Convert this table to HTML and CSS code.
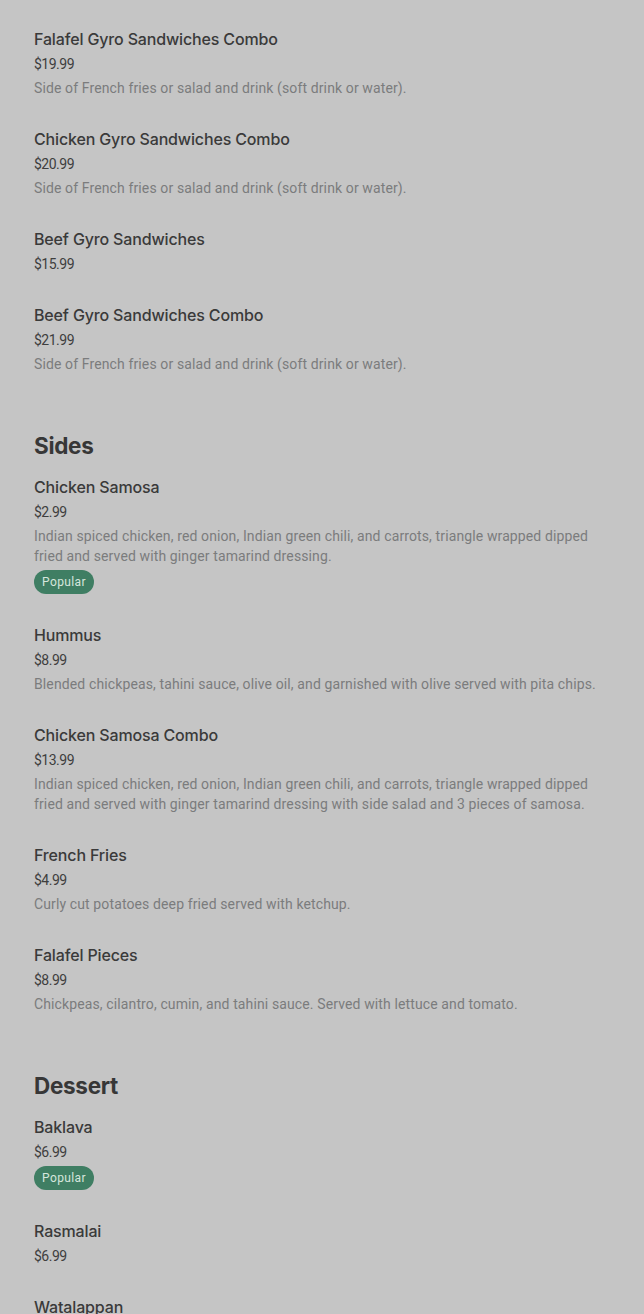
FILE: index.html
```html
<!DOCTYPE html>
<html lang="en">
<head>
<meta charset="utf-8">
<title>Menu</title>
<link rel="stylesheet" href="styles.css">
</head>
<body>
<main class="menu">
  <section class="section">
    <div class="item">
      <div class="item-title">Falafel Gyro Sandwiches Combo</div>
      <div class="item-price">$19.99</div>
      <div class="item-desc">Side of French fries or salad and drink (soft drink or water).</div>
    </div>
    <div class="item">
      <div class="item-title">Chicken Gyro Sandwiches Combo</div>
      <div class="item-price">$20.99</div>
      <div class="item-desc">Side of French fries or salad and drink (soft drink or water).</div>
    </div>
    <div class="item">
      <div class="item-title">Beef Gyro Sandwiches</div>
      <div class="item-price">$15.99</div>
    </div>
    <div class="item">
      <div class="item-title">Beef Gyro Sandwiches Combo</div>
      <div class="item-price">$21.99</div>
      <div class="item-desc">Side of French fries or salad and drink (soft drink or water).</div>
    </div>
  </section>

  <section class="section">
    <h2 class="section-title">Sides</h2>
    <div class="item">
      <div class="item-title">Chicken Samosa</div>
      <div class="item-price">$2.99</div>
      <div class="item-desc">Indian spiced chicken, red onion, Indian green chili, and carrots, triangle wrapped dipped fried and served with ginger tamarind dressing.</div>
      <span class="badge">Popular</span>
    </div>
    <div class="item">
      <div class="item-title">Hummus</div>
      <div class="item-price">$8.99</div>
      <div class="item-desc">Blended chickpeas, tahini sauce, olive oil, and garnished with olive served with pita chips.</div>
    </div>
    <div class="item">
      <div class="item-title">Chicken Samosa Combo</div>
      <div class="item-price">$13.99</div>
      <div class="item-desc">Indian spiced chicken, red onion, Indian green chili, and carrots, triangle wrapped dipped fried and served with ginger tamarind dressing with side salad and 3 pieces of samosa.</div>
    </div>
    <div class="item">
      <div class="item-title">French Fries</div>
      <div class="item-price">$4.99</div>
      <div class="item-desc">Curly cut potatoes deep fried served with ketchup.</div>
    </div>
    <div class="item">
      <div class="item-title">Falafel Pieces</div>
      <div class="item-price">$8.99</div>
      <div class="item-desc">Chickpeas, cilantro, cumin, and tahini sauce. Served with lettuce and tomato.</div>
    </div>
  </section>

  <section class="section">
    <h2 class="section-title">Dessert</h2>
    <div class="item">
      <div class="item-title">Baklava</div>
      <div class="item-price">$6.99</div>
      <span class="badge">Popular</span>
    </div>
    <div class="item">
      <div class="item-title">Rasmalai</div>
      <div class="item-price">$6.99</div>
    </div>
    <div class="item">
      <div class="item-title">Watalappan</div>
      <div class="item-price">$6.99</div>
    </div>
  </section>
</main>
</body>
</html>
```

FILE: styles.css
```css
html, body {
  margin: 0;
  padding: 0;
  background: #c5c5c5;
}

body {
  font-family: Roboto, "Liberation Sans", sans-serif;
  color: #3b3b3b;
}

.menu {
  padding: 13px 34px 0 34px;
}

.section + .section {
  margin-top: 41px;
}

.section-title {
  margin: 0 0 -1px 0;
  font-family: Inter, Roboto, sans-serif;
  font-size: 22.5px;
  line-height: 32px;
  font-weight: 700;
  letter-spacing: -0.3px;
  color: #373737;
}

.item {
  display: flex;
  flex-direction: column;
  align-items: flex-start;
  padding: 14px 0 15px 0;
}

.item-title {
  font-family: Inter, Roboto, sans-serif;
  font-size: 16px;
  line-height: 24px;
  font-weight: 500;
  letter-spacing: -0.15px;
  color: #3a3a3a;
}

.item-price {
  margin-top: 3px;
  font-size: 14px;
  line-height: 20px;
  letter-spacing: -0.5px;
  color: #3e3e3e;
}

.item-desc {
  margin-top: 4px;
  font-size: 14px;
  line-height: 20px;
  letter-spacing: 0.12px;
  color: #7b7c7d;
}

.badge {
  margin-top: 4px;
  height: 24px;
  padding: 0 8px;
  border-radius: 12px;
  background: #3f7e63;
  color: #d6e6dd;
  font-size: 12px;
  line-height: 24px;
  letter-spacing: 0.4px;
}
```
